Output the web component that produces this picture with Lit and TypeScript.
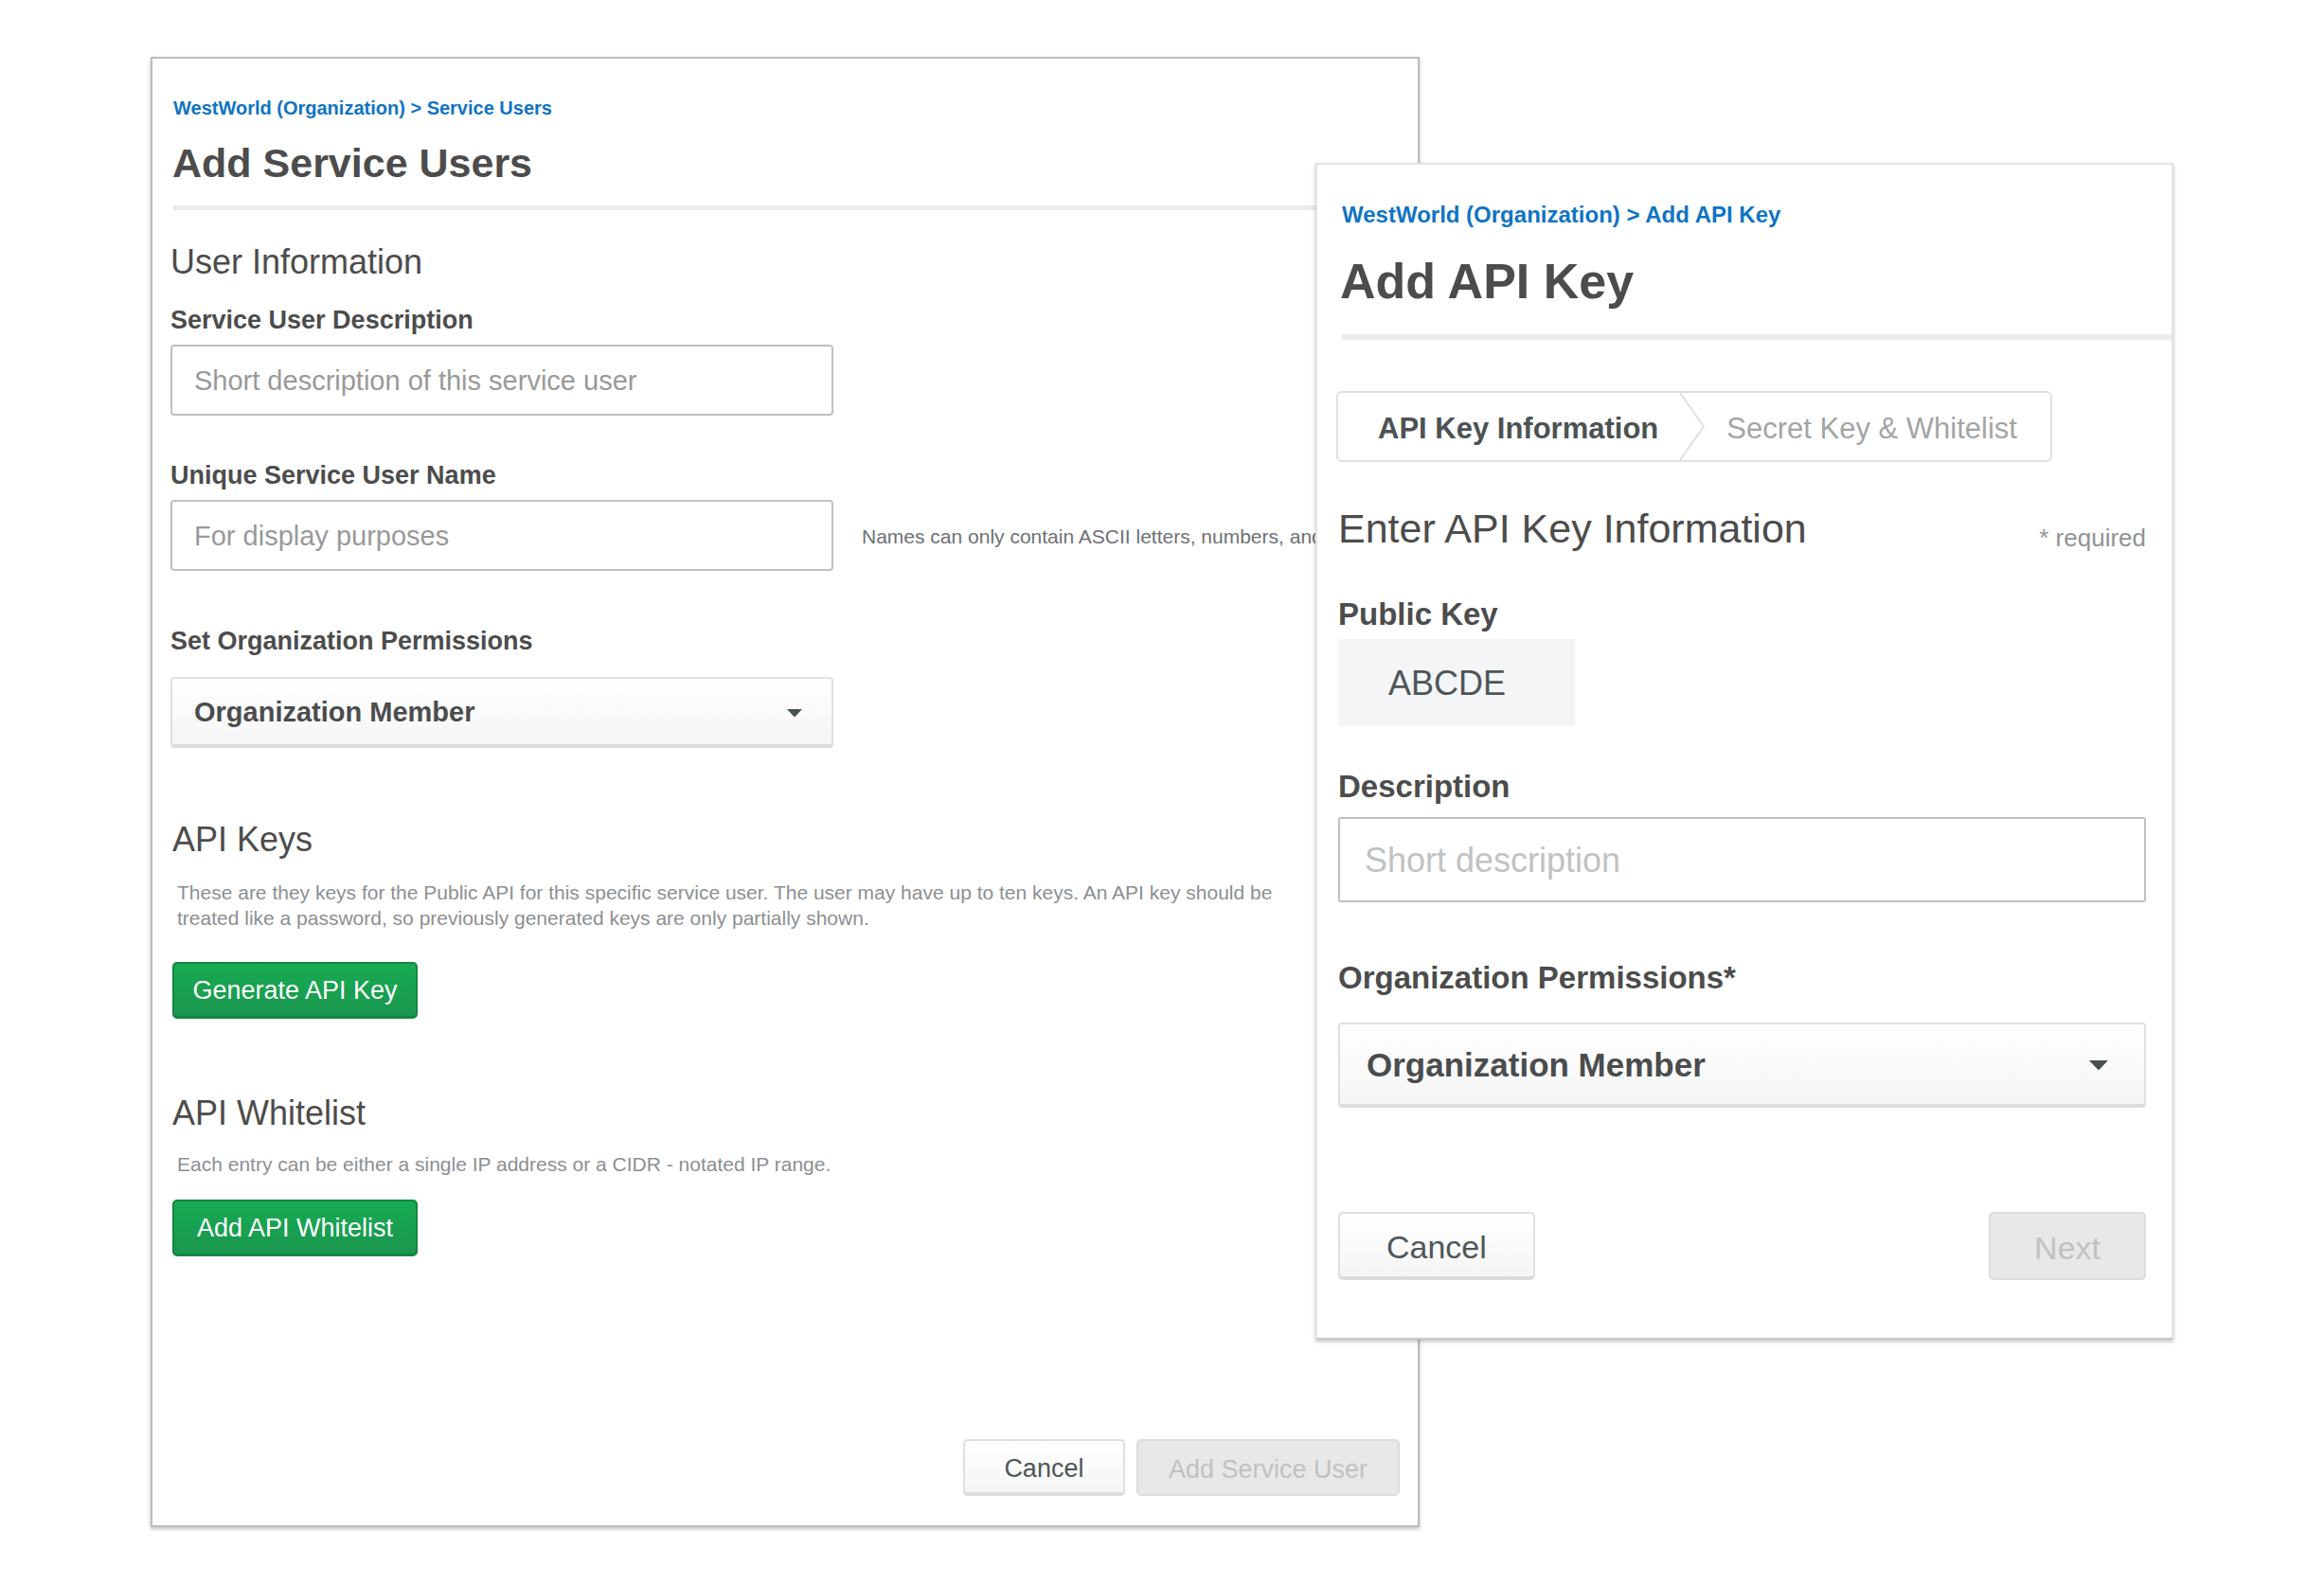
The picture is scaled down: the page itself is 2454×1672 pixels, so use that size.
import { LitElement, html, css, TemplateResult } from "lit";
import { customElement } from "lit/decorators.js";

@customElement("app-root")
export class AppRoot extends LitElement {
  static styles = css`
    :host {
      display: block;
      min-height: 100vh;
      background: #ffffff;
      color: #4c4c4c;
      font-family: "Liberation Sans", Arial, Helvetica, sans-serif;
    }
    *,
    *::before,
    *::after {
      box-sizing: border-box;
    }
    h1,
    h2,
    p {
      margin: 0;
    }

    /* The dialog shares the middle column with the page behind it. */
    .stage {
      display: grid;
      grid-template-columns:
        minmax(0, 159fr) minmax(0, 1230fr) minmax(0, 110fr)
        minmax(0, 796fr) minmax(0, 159fr);
      align-items: start;
      padding: 60px 0;
    }
    .page,
    .dialog {
      grid-row: 1;
      display: flex;
      flex-direction: column;
      background: #ffffff;
    }
    .page {
      --control: 75px;
      --control-text: 29px;
      --select-text: 29px;
      --control-pad: 23px;
      --select-pad: 23px;
      --arrow: 16px;
      --arrow-gap: 33px;
      --label: 27px;
      --label-line: 32px;
      --heading: 36px;
      --heading-line: 40px;
      --action: 60px;
      --action-text: 27px;
      grid-column: 2 / 4;
      padding: 40px 0 31px 19px;
      border: 2px solid #bcbdbd;
      box-shadow: 0 2px 4px rgba(0, 0, 0, 0.25);
    }
    .dialog {
      --control: 90px;
      --control-text: 36px;
      --select-text: 35px;
      --control-pad: 26px;
      --select-pad: 28px;
      --arrow: 20px;
      --arrow-gap: 40px;
      --label: 33px;
      --label-line: 36px;
      --heading: 43px;
      --heading-line: 48px;
      --action: 72px;
      --action-text: 34px;
      grid-column: 3 / 5;
      z-index: 1;
      margin-top: 112px;
      padding: 39px 0 61px 20px;
      border: 2px solid #e2e3e3;
      border-bottom-color: #c4c5c5;
      box-shadow: 0 2px 4px rgba(0, 0, 0, 0.25);
    }

    .crumbs {
      padding-left: 3px;
      color: #0f74c4;
      font-weight: bold;
      font-size: 20px;
      line-height: 24px;
    }
    .crumbs a {
      color: inherit;
      text-decoration: none;
    }
    .title {
      margin-top: 20px;
      padding-left: 2px;
      font-size: 43px;
      line-height: 52px;
    }
    .rule {
      width: auto;
      height: 5px;
      margin: 19px 0 35px 3px;
      border: 0;
      background: #eaebed;
    }
    .dialog .crumbs {
      padding-left: 6px;
      font-size: 24px;
      line-height: 28px;
    }
    .dialog .title {
      margin-top: 26px;
      padding-left: 4px;
      font-size: 52px;
      line-height: 60px;
    }
    .dialog .rule {
      height: 6px;
      margin: 26px 0 54px 6px;
    }

    .heading {
      font-weight: normal;
      font-size: var(--heading);
      line-height: var(--heading-line);
    }
    .label {
      color: #4c4c4c;
      font-weight: bold;
      font-size: var(--label);
      line-height: var(--label-line);
    }
    .field {
      display: flex;
      flex-direction: column;
      gap: 10px;
    }
    .row {
      display: flex;
      align-items: center;
      gap: 30px;
    }
    .page .control {
      flex-shrink: 0;
      width: 100%;
      max-width: 700px;
    }
    .text {
      display: block;
      width: 100%;
      height: var(--control);
      padding: 2px var(--control-pad) 0;
      border: 2px solid #bcc2c2;
      border-radius: 4px;
      background: #ffffff;
      color: #4c4c4c;
      font: inherit;
      font-size: var(--control-text);
    }
    .text::placeholder {
      color: #999999;
      opacity: 1;
    }
    .dialog .text {
      border-radius: 2px;
    }
    .dialog .text::placeholder {
      color: #bfc3c3;
    }
    .select {
      display: grid;
      align-items: center;
      justify-items: end;
    }
    .select select {
      grid-area: 1 / 1;
      width: 100%;
      height: var(--control);
      padding: 0 var(--select-pad);
      appearance: none;
      border: 2px solid #dfe0e0;
      border-bottom: 4px solid #dcdcdc;
      border-radius: 4px;
      background: linear-gradient(#ffffff, #f5f5f5);
      color: #4a4c4d;
      font: inherit;
      font-size: var(--select-text);
      font-weight: bold;
    }
    .select svg {
      grid-area: 1 / 1;
      width: var(--arrow);
      height: auto;
      margin-right: var(--arrow-gap);
      pointer-events: none;
      fill: #4a5052;
    }
    .hint {
      overflow: hidden;
      padding-top: 2px;
      color: #6d7174;
      font-size: 21px;
      line-height: 27px;
      white-space: nowrap;
    }
    .note {
      padding: 0 100px 0 7px;
      color: #8c8f92;
      font-size: 21px;
      line-height: 27px;
    }

    .action {
      height: var(--action);
      padding: 4px 22px 0;
      border: 2px solid #dfe0e0;
      border-bottom: 4px solid #dcdcdc;
      border-radius: 5px;
      background: linear-gradient(#ffffff, #f5f5f5);
      color: #4f5658;
      font: inherit;
      font-size: var(--action-text);
    }
    .action.primary {
      align-self: flex-start;
      min-width: 259px;
      padding: 2px 16px 0;
      border-color: #15853f;
      border-bottom-width: 3px;
      background: linear-gradient(#17ab54, #1a964e);
      color: #ffffff;
    }
    .action:disabled {
      border: 2px solid #dbdedd;
      background: #e7e9e8;
      color: #bfc2c2;
    }

    .page .names {
      margin-top: 47px;
    }
    .page .permissions {
      gap: 22px;
      margin-top: 58px;
    }
    .page .info {
      margin-bottom: 25px;
    }
    .section {
      display: flex;
      flex-direction: column;
    }
    .section .heading {
      padding-left: 2px;
    }
    .section .action {
      margin-left: 2px;
    }
    .keys {
      gap: 22px;
      margin-top: 77px;
    }
    .keys .action {
      margin-top: 11px;
    }
    .whitelist {
      gap: 20px;
      margin-top: 80px;
    }
    .whitelist .action {
      margin-top: 4px;
    }
    .page .footer {
      display: flex;
      justify-content: flex-end;
      gap: 12px;
      margin-top: 193px;
      padding-right: 19px;
    }
    .page .footer .action {
      min-width: 171px;
      padding-right: 32px;
      padding-left: 32px;
    }

    .body {
      display: flex;
      flex-direction: column;
      padding: 0 27px 0 2px;
    }
    .steps {
      display: flex;
      align-self: flex-start;
      align-items: center;
      height: 75px;
      margin: 0 0 0 -2px;
      padding: 0 35px 0 42px;
      border: 2px solid #dfe0e0;
      border-radius: 6px;
      list-style: none;
      color: #a3a5a5;
      font-size: 31px;
      line-height: 36px;
    }
    .step {
      padding-top: 4px;
    }
    .current {
      color: #4c5254;
      font-weight: bold;
    }
    .steps svg {
      display: block;
      width: 26px;
      height: 71px;
      margin: 0 23px;
      fill: none;
      stroke: #dfe0e0;
      stroke-width: 2;
    }
    .intro {
      display: flex;
      justify-content: space-between;
      align-items: flex-end;
      margin: 46px 0 49px;
    }
    .required {
      color: #8f9294;
      font-size: 26px;
      line-height: 27px;
    }
    .dialog .public {
      gap: 8px;
    }
    .key {
      align-self: flex-start;
      min-width: 250px;
      padding: 2px 53px 0;
      background: #f4f5f7;
      color: #4f5658;
      font-size: 36px;
      line-height: 90px;
    }
    .dialog .description {
      gap: 14px;
      margin-top: 46px;
    }
    .dialog .permissions {
      gap: 29px;
      margin-top: 62px;
    }
    .dialog .footer {
      display: flex;
      justify-content: space-between;
      margin-top: 110px;
    }
    .dialog .footer .action {
      padding-right: 46px;
      padding-left: 46px;
    }
    .dialog .footer .cancel {
      padding-right: 49px;
      padding-left: 49px;
    }
  `;

  private select(id: string): TemplateResult {
    return html`
      <div class="control select">
        <select id=${id}>
          <option>Organization Member</option>
        </select>
        <svg viewBox="0 0 16 8" aria-hidden="true"><path d="M0 0h16l-7 7.4q-1 1-2 0z" /></svg>
      </div>
    `;
  }

  private page(): TemplateResult {
    return html`
      <main class="page">
        <nav class="crumbs">
          <a href="#organization">WestWorld (Organization)</a> &gt;
          <a href="#service-users">Service Users</a>
        </nav>
        <h1 class="title">Add Service Users</h1>
        <hr class="rule" />

        <h2 class="heading info">User Information</h2>
        <div class="field">
          <label class="label" for="user-description">Service User Description</label>
          <input class="control text" id="user-description" placeholder="Short description of this service user" />
        </div>
        <div class="field names">
          <label class="label" for="user-name">Unique Service User Name</label>
          <div class="row">
            <input class="control text" id="user-name" placeholder="For display purposes" />
            <span class="hint">Names can only contain ASCII letters, numbers, and</span>
          </div>
        </div>
        <div class="field permissions">
          <label class="label" for="user-role">Set Organization Permissions</label>
          ${this.select("user-role")}
        </div>

        <section class="section keys">
          <h2 class="heading">API Keys</h2>
          <p class="note">
            These are they keys for the Public API for this specific service user. The user may have up to ten keys. An
            API key should be treated like a password, so previously generated keys are only partially shown.
          </p>
          <button class="action primary" type="button">Generate API Key</button>
        </section>
        <section class="section whitelist">
          <h2 class="heading">API Whitelist</h2>
          <p class="note">Each entry can be either a single IP address or a CIDR - notated IP range.</p>
          <button class="action primary" type="button">Add API Whitelist</button>
        </section>

        <footer class="footer">
          <button class="action" type="button">Cancel</button>
          <button class="action" type="button" disabled>Add Service User</button>
        </footer>
      </main>
    `;
  }

  private dialog(): TemplateResult {
    return html`
      <section class="dialog">
        <nav class="crumbs">
          <a href="#organization">WestWorld (Organization)</a> &gt;
          <a href="#add-api-key">Add API Key</a>
        </nav>
        <h1 class="title">Add API Key</h1>
        <hr class="rule" />

        <div class="body">
          <div class="steps">
            <span class="step current">API Key Information</span>
            <svg viewBox="0 0 26 71" aria-hidden="true"><path d="M0 0L25 35.5L0 71" /></svg>
            <span class="step">Secret Key &amp; Whitelist</span>
          </div>
          <div class="intro">
            <h2 class="heading">Enter API Key Information</h2>
            <span class="required">* required</span>
          </div>
          <div class="field public">
            <span class="label">Public Key</span>
            <span class="key">ABCDE</span>
          </div>
          <div class="field description">
            <label class="label" for="key-description">Description</label>
            <input class="control text" id="key-description" placeholder="Short description" />
          </div>
          <div class="field permissions">
            <label class="label" for="key-role">Organization Permissions*</label>
            ${this.select("key-role")}
          </div>
          <footer class="footer">
            <button class="action cancel" type="button">Cancel</button>
            <button class="action" type="button" disabled>Next</button>
          </footer>
        </div>
      </section>
    `;
  }

  render(): TemplateResult {
    return html`<div class="stage">${this.page()} ${this.dialog()}</div>`;
  }
}
